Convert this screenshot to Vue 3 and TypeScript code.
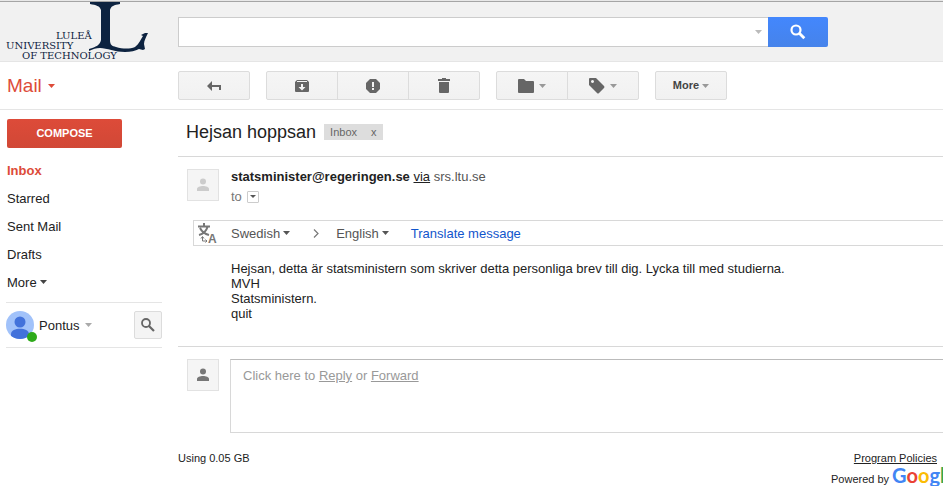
<script setup lang="ts">
import { ref } from 'vue'

interface NavItem {
  label: string
  active?: boolean
  more?: boolean
}

const navItems: NavItem[] = [
  { label: 'Inbox', active: true },
  { label: 'Starred' },
  { label: 'Sent Mail' },
  { label: 'Drafts' },
  { label: 'More', more: true },
]

const bodyLines: string[] = [
  'Hejsan, detta är statsministern som skriver detta personliga brev till dig. Lycka till med studierna.',
  'MVH',
  'Statsministern.',
  'quit',
]

const query = ref('')
const fromLanguage = ref('Swedish')
const toLanguage = ref('English')
</script>

<template>
  <div class="page">
    <header class="header">
      <a class="logo" href="#" aria-label="Luleå University of Technology">
        <span class="logo-words">
          <span class="word-one">LULEÅ</span>
          <span class="word-two">UNIVERSITY</span>
          <span class="word-three">OF TECHNOLOGY</span>
        </span>
        <svg class="logo-mark" width="60" height="52" viewBox="0 0 60 52" aria-hidden="true">
          <path
            d="M1 0h30v2c-6 1-9 2-10 6v30c0 5 2 6 6 7c7 2 14 2 19 0c4-3 6-8 8-11l-2-1l4-2h3c-2 4-4 8-4 11l1 5l-2 1l-4-1c-4 2-8 3-14 3c-10 0-18-4-25-4c-4 0-7 1-11 3v-2c7-2 11-4 12-9V8c-1-4-5-5-11-6z"
          />
        </svg>
      </a>
      <form class="search" role="search" @submit.prevent>
        <div class="search-field">
          <input v-model="query" type="text" aria-label="Search mail" />
          <button type="button" class="search-options" aria-label="Search options">
            <svg width="7" height="4" viewBox="0 0 7 4"><path d="M0 0h7L3.500 4z" /></svg>
          </button>
        </div>
        <button type="submit" class="search-button" aria-label="Search">
          <svg class="outline" width="16" height="16" viewBox="0 0 16 16">
            <circle cx="6" cy="6" r="4.500" stroke-width="2.200" />
            <path d="M9.300 9.300l5 5" stroke-width="2.800" />
          </svg>
        </button>
      </form>
    </header>

    <div class="toolbar">
      <button type="button" class="mail-menu">
        Mail
        <svg width="7" height="4" viewBox="0 0 7 4"><path d="M0 0h7L3.500 4z" /></svg>
      </button>
      <div class="tools">
        <div class="group">
          <button type="button" class="tool" aria-label="Back to Inbox">
            <svg width="14" height="10" viewBox="0 0 14 10">
              <path d="M5 0v4h9v5h-2V6H5v4L0 5z" />
            </svg>
          </button>
        </div>
        <div class="group">
          <button type="button" class="tool" aria-label="Archive">
            <svg width="14" height="12" viewBox="0 0 14 12">
              <path
                fill-rule="evenodd"
                d="M2 0h10l2 2v9q0 1-1 1H1q-1 0-1-1V2zM2 1v1h10V1zM6 4v3H3.500L7 10.500L10.500 7H8V4z"
              />
            </svg>
          </button>
          <button type="button" class="tool" aria-label="Report spam">
            <svg width="14" height="14" viewBox="0 0 14 14">
              <path
                fill-rule="evenodd"
                d="M4 0h6l4 4v6l-4 4H4l-4-4V4zM6 3v5h2V3zM6 9v2h2V9z"
              />
            </svg>
          </button>
          <button type="button" class="tool" aria-label="Delete">
            <svg width="12" height="15" viewBox="0 0 12 15">
              <path d="M0 1h4V0h4v1h4v2H0zM1 4h10v10q0 1-1 1H2q-1 0-1-1z" />
            </svg>
          </button>
        </div>
        <div class="group">
          <button type="button" class="tool" aria-label="Move to">
            <svg width="16" height="14" viewBox="0 0 16 14">
              <path d="M1 0h5l2 2h7q1 0 1 1v10q0 1-1 1H1q-1 0-1-1V1q0-1 1-1z" />
            </svg>
            <svg class="pale" width="7" height="4" viewBox="0 0 7 4"><path d="M0 0h7L3.500 4z" /></svg>
          </button>
          <button type="button" class="tool" aria-label="Labels">
            <svg width="16" height="16" viewBox="0 0 16 16">
              <path
                fill-rule="evenodd"
                d="M1 0h6l8 8q1 1 0 2l-5 5q-1 1-2 0L0 7V1q0-1 1-1zM3.500 2a1.500 1.500 0 1 0 .01 0z"
              />
            </svg>
            <svg class="pale" width="7" height="4" viewBox="0 0 7 4"><path d="M0 0h7L3.500 4z" /></svg>
          </button>
        </div>
        <div class="group">
          <button type="button" class="tool more-tool">
            More
            <svg class="pale" width="7" height="4" viewBox="0 0 7 4"><path d="M0 0h7L3.500 4z" /></svg>
          </button>
        </div>
      </div>
    </div>

    <div class="columns">
      <aside class="sidebar">
        <button type="button" class="compose">COMPOSE</button>
        <nav class="nav">
          <a
            v-for="item in navItems"
            :key="item.label"
            href="#"
            :class="{ active: item.active }"
          >
            {{ item.label }}
            <svg v-if="item.more" width="7" height="4" viewBox="0 0 7 4"><path d="M0 0h7L3.500 4z" /></svg>
          </a>
        </nav>
        <div class="chat">
          <span class="presence">
            <svg width="28" height="28" viewBox="0 0 28 28" aria-hidden="true">
              <defs>
                <clipPath id="face"><circle cx="14" cy="14" r="14" /></clipPath>
              </defs>
              <g clip-path="url(#face)">
                <path fill="#a1c2fa" d="M0 0h28v28H0z" />
                <circle cx="14" cy="11" r="5.500" fill="#4272db" />
                <path fill="#4272db" d="M5 28v-5c0-7 18-7 18 0v5z" />
              </g>
            </svg>
            <span class="dot"></span>
          </span>
          <button type="button" class="person">
            Pontus
            <svg width="7" height="4" viewBox="0 0 7 4"><path d="M0 0h7L3.500 4z" /></svg>
          </button>
          <button type="button" class="chat-search" aria-label="Search people">
            <svg class="outline" width="14" height="14" viewBox="0 0 14 14">
              <circle cx="5" cy="5" r="4" stroke-width="1.800" />
              <path d="M8 8l5 5" stroke-width="2.200" />
            </svg>
          </button>
        </div>
      </aside>

      <main class="main">
        <div class="subject">
          <h1>Hejsan hoppsan</h1>
          <span class="chip">Inbox<button type="button" aria-label="Remove label Inbox">x</button></span>
        </div>

        <article class="message">
          <div class="sender">
            <span class="avatar faint">
              <svg width="12" height="14" viewBox="0 0 12 14">
                <circle cx="6" cy="3.500" r="3" /><path d="M0 13v-2c0-4 12-4 12 0v2z" />
              </svg>
            </span>
            <div class="sender-lines">
              <p><b>statsminister@regeringen.se</b> <a href="#">via</a> srs.ltu.se</p>
              <p class="recipient">
                to
                <button type="button" aria-label="Show details">
                  <svg width="6" height="3" viewBox="0 0 6 3"><path d="M0 0h6L3 3z" /></svg>
                </button>
              </p>
            </div>
          </div>

          <div class="translate">
            <svg class="translate-icon" width="20" height="22" viewBox="0 0 20 22" aria-hidden="true">
              <path
                d="M6 1v3M0 4.500h12M2 6c2 4 5 6 9 7M9.500 5C8 10 5 12 1 13"
                fill="none"
                stroke="#777"
                stroke-width="2"
              />
              <path d="M4.500 15v4h4M3 16.500l1.500-2l1.500 2M7.500 17.500l1.500 1.500l-1.500 1.500" fill="none" stroke="#777" />
              <text x="10" y="21">A</text>
            </svg>
            <label class="language from">
              <select v-model="fromLanguage" aria-label="Translate from"><option>Swedish</option></select>
              <svg width="7" height="4" viewBox="0 0 7 4"><path d="M0 0h7L3.500 4z" /></svg>
            </label>
            <svg class="chevron" width="6" height="9" viewBox="0 0 6 9">
              <path d="M1 .5l4 4l-4 4" fill="none" stroke="#777" stroke-width="1.200" />
            </svg>
            <label class="language">
              <select v-model="toLanguage" aria-label="Translate to"><option>English</option></select>
              <svg width="7" height="4" viewBox="0 0 7 4"><path d="M0 0h7L3.500 4z" /></svg>
            </label>
            <a href="#">Translate message</a>
          </div>

          <div class="body">
            <p v-for="line in bodyLines" :key="line">{{ line }}</p>
          </div>
        </article>

        <section class="reply">
          <span class="avatar">
            <svg width="12" height="14" viewBox="0 0 12 14">
              <circle cx="6" cy="3.500" r="3" /><path d="M0 13v-2c0-4 12-4 12 0v2z" />
            </svg>
          </span>
          <div class="reply-box">
            Click here to <a href="#">Reply</a> or <a href="#">Forward</a>
          </div>
        </section>

        <footer class="footer">
          <span>Using 0.05 GB</span>
          <div class="legal">
            <a href="#">Program Policies</a>
            <span class="powered">
              Powered by
              <span class="google"><i class="blue">G</i><i class="red">o</i><i class="yellow">o</i><i class="blue">g</i><i class="green">l</i><i class="red">e</i></span>
            </span>
          </div>
        </footer>
      </main>
    </div>
  </div>
</template>

<style>
body {
  margin: 0;
  background: #fff;
}
</style>

<style scoped>
* {
  box-sizing: border-box;
}

.page {
  height: 100vh;
  overflow: hidden;
  color: #222;
  font: 13px/15px 'Liberation Sans', Arial, sans-serif;
}

p,
h1 {
  margin: 0;
}

button,
input,
select {
  margin: 0;
  padding: 0;
  border: 0;
  background: none;
  color: inherit;
  font: inherit;
}

svg {
  flex: none;
  fill: currentColor;
}

.outline {
  fill: none;
  stroke: currentColor;
}

a {
  color: inherit;
}

.header {
  display: grid;
  grid-template-columns: 178px 1fr;
  height: 62px;
  padding-top: 1px;
  border-bottom: 1px solid #e5e5e5;
  background: #f1f1f1;
  box-shadow: inset 0 1px #e8e8e8, inset 0 2px #a5a5a5;
}

.logo {
  position: relative;
  color: #0d2340;
  font: 10px/10px 'DejaVu Serif', 'Liberation Serif', serif;
  text-decoration: none;
}

.logo-words {
  display: flex;
  flex-direction: column;
  padding: 30px 0 0 6px;
}

.word-one {
  padding-left: 50px;
}

.word-three {
  padding-left: 16px;
}

.logo-mark {
  position: absolute;
  top: 1px;
  left: 89px;
}

.search {
  display: flex;
  align-items: flex-start;
  padding-top: 16px;
}

.search-field {
  display: flex;
  width: 590px;
  height: 30px;
  border: 1px solid #ccc;
  border-right: 0;
  background: #fff;
}

.search-field input {
  flex: 1;
  min-width: 0;
  padding: 0 8px;
  outline: 0;
}

.search-options {
  display: grid;
  place-items: center;
  width: 20px;
  color: #bbb;
}

.search-button {
  display: grid;
  place-items: center;
  width: 60px;
  height: 30px;
  border-radius: 0 2px 2px 0;
  background: linear-gradient(#4387fd, #4683ea);
  color: #fff;
}

.toolbar {
  display: grid;
  grid-template-columns: 178px 1fr;
  align-items: center;
  height: 48px;
  border-bottom: 1px solid #e5e5e5;
}

.mail-menu {
  display: flex;
  align-items: center;
  gap: 6px;
  padding-left: 7px;
  color: #dd4b39;
  font-size: 19px;
  line-height: 24px;
}

.tools {
  display: flex;
  gap: 16px;
}

.group {
  display: flex;
}

.tool {
  display: flex;
  align-items: center;
  justify-content: center;
  gap: 5px;
  width: 72px;
  height: 29px;
  border: 1px solid #dcdcdc;
  background: linear-gradient(#f5f5f5, #f1f1f1);
  color: #666;
}

.tool + .tool {
  margin-left: -1px;
}

.tool:first-child {
  border-top-left-radius: 2px;
  border-bottom-left-radius: 2px;
}

.tool:last-child {
  border-top-right-radius: 2px;
  border-bottom-right-radius: 2px;
}

.more-tool {
  gap: 3px;
  color: #444;
  font-size: 11px;
  font-weight: bold;
}

.pale {
  color: #999;
}

.columns {
  display: grid;
  grid-template-columns: 162px minmax(0, 1fr);
  column-gap: 16px;
}

.sidebar {
  padding: 9px 0 0 6px;
}

.compose {
  width: 115px;
  height: 29px;
  margin-left: 1px;
  border-radius: 2px;
  background: linear-gradient(#dd4b39, #d14836);
  color: #fff;
  font-size: 11px;
  font-weight: bold;
}

.nav {
  display: flex;
  flex-direction: column;
  padding: 8px 0 6px 1px;
}

.nav a {
  display: flex;
  align-items: center;
  gap: 3px;
  height: 28px;
  text-decoration: none;
}

.nav .active {
  color: #dd4b39;
  font-weight: bold;
}

.nav svg {
  color: #444;
}

.chat {
  display: flex;
  align-items: center;
  height: 46px;
  border: solid #e5e5e5;
  border-width: 1px 0;
}

.presence {
  position: relative;
  height: 28px;
}

.presence svg {
  display: block;
}

.dot {
  position: absolute;
  right: -3px;
  bottom: -3px;
  width: 10px;
  height: 10px;
  border-radius: 50%;
  background: #2eaa1b;
}

.person {
  display: flex;
  align-items: center;
  gap: 6px;
  margin-left: 5px;
}

.person svg {
  color: #aaa;
}

.chat-search {
  display: grid;
  place-items: center;
  width: 28px;
  height: 28px;
  margin-left: auto;
  border: 1px solid #dcdcdc;
  border-radius: 2px;
  background: #f4f4f4;
  color: #666;
}

.subject {
  display: flex;
  align-items: center;
  gap: 8px;
  height: 47px;
  padding: 0 0 2px 8px;
  border-bottom: 1px solid #d8d8d8;
}

.subject h1 {
  font-size: 18px;
  font-weight: normal;
  line-height: 24px;
}

.chip {
  display: flex;
  gap: 14px;
  padding: 0 6px;
  background: #ddd;
  color: #666;
  font-size: 11px;
  line-height: 16px;
}

.message {
  padding: 12px 0 25px;
  border-bottom: 1px solid #d8d8d8;
}

.sender {
  display: flex;
  gap: 12px;
  padding-left: 9px;
}

.avatar {
  display: grid;
  flex: none;
  place-items: center;
  width: 32px;
  height: 32px;
  border: 1px solid #e2e2e2;
  background: #f5f5f5;
  color: #777;
}

.faint {
  color: #ccc;
}

.sender-lines {
  display: flex;
  flex-direction: column;
  gap: 5px;
  color: #555;
}

.sender-lines b,
.sender-lines a {
  color: #222;
}

.recipient {
  display: flex;
  align-items: center;
  gap: 5px;
  color: #777;
}

.recipient button {
  display: grid;
  place-items: center;
  width: 12px;
  height: 12px;
  border: 1px solid #ccc;
  border-radius: 1px;
  color: #555;
}

.translate {
  display: flex;
  align-items: center;
  height: 26px;
  margin: 16px 0 15px 15px;
  padding-left: 4px;
  border: 1px solid #d8d8d8;
  border-right: 0;
  color: #555;
}

.translate-icon text {
  fill: #777;
  font-size: 12px;
  font-weight: bold;
}

.language {
  display: flex;
  align-items: center;
  gap: 3px;
}

.from {
  margin-left: 13px;
}

.language select {
  appearance: none;
  field-sizing: content;
  outline: 0;
}

.chevron {
  margin: 0 17px 0 23px;
}

.translate a {
  margin-left: 22px;
  color: #15c;
  text-decoration: none;
}

.body {
  padding-left: 53px;
}

.reply {
  display: flex;
  gap: 11px;
  padding: 12px 0 0 9px;
}

.reply-box {
  flex: 1;
  height: 74px;
  padding: 8px 12px;
  border: 1px solid #d8d8d8;
  border-top-color: #bbb;
  border-right: 0;
  color: #999;
}

.footer {
  display: flex;
  justify-content: space-between;
  padding: 18px 6px 0 0;
  font-size: 11px;
}

.legal {
  display: flex;
  flex-direction: column;
  width: 106px;
}

.legal > a {
  align-self: flex-end;
}

.powered {
  display: flex;
  align-items: baseline;
  gap: 3px;
  white-space: nowrap;
}

.google {
  font-family: Lato, 'Liberation Sans', sans-serif;
  font-size: 20px;
  font-weight: bold;
  line-height: 18px;
}

.google i {
  font-style: normal;
}

.blue {
  color: #4285f4;
}

.red {
  color: #ea4335;
}

.yellow {
  color: #fbbc05;
}

.green {
  color: #34a853;
}
</style>
